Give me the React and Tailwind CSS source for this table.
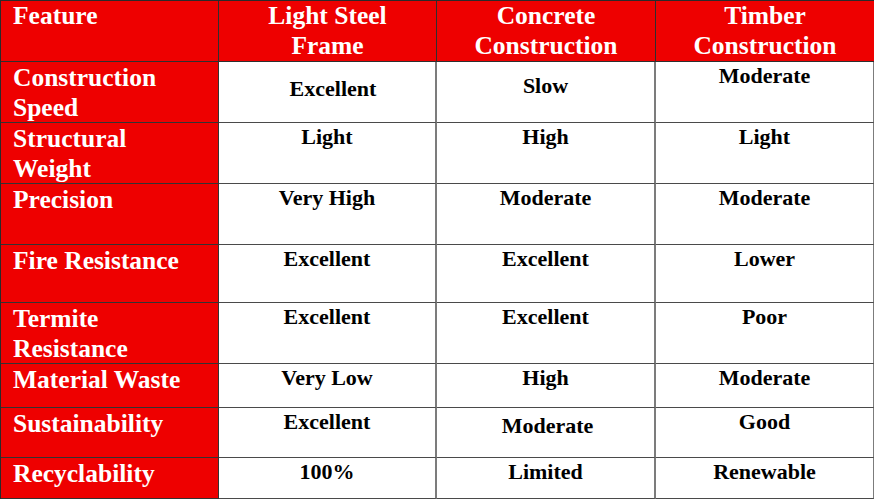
import React from "react";

const headers = [
  ["Light Steel", "Frame"],
  ["Concrete", "Construction"],
  ["Timber", "Construction"],
];

// label lines, row height, values as [text, paddingTop class, extra class]
const rows = [
  { label: ["Construction", "Speed"], h: "h-[61px]", cells: [["Excellent", "pt-[14px]", "pl-3"], ["Slow", "pt-[11px]"], ["Moderate", "pt-[1px]"]] },
  { label: ["Structural", "Weight"], h: "h-[61px]", cells: [["Light"], ["High"], ["Light"]] },
  { label: ["Precision"], h: "h-[61px]", cells: [["Very High"], ["Moderate"], ["Moderate"]] },
  { label: ["Fire Resistance"], h: "h-[58px]", cells: [["Excellent"], ["Excellent"], ["Lower"]] },
  { label: ["Termite", "Resistance"], h: "h-[61px]", cells: [["Excellent"], ["Excellent"], ["Poor"]] },
  { label: ["Material Waste"], h: "h-[44px]", cells: [["Very Low"], ["High"], ["Moderate"]] },
  { label: ["Sustainability"], h: "h-[50px]", cells: [["Excellent"], ["Moderate", "pt-[5px]", "pl-1"], ["Good"]] },
  { label: ["Recyclability"], h: "h-[41px]", cells: [["100%"], ["Limited"], ["Renewable"]] },
];

export default function App() {
  return (
    <div className="w-[874px] h-[500px] bg-white font-['Liberation_Serif','Times_New_Roman',serif] font-bold">
      <div className="grid grid-cols-[218px_218px_219px_219px] border-t border-l border-[#2a2a2a]">
        {/* header */}
        <div className="h-[61px] bg-[#ee0000] text-white text-[25.5px] leading-[29.5px] pl-3 border-r border-b border-[#2f2f2f]">
          Feature
        </div>
        {headers.map((h, i) => (
          <div
            key={i}
            className="h-[61px] bg-[#ee0000] text-white text-[25.5px] leading-[29.5px] text-center border-r border-b border-[#2f2f2f]"
          >
            {h[0]}
            <br />
            {h[1]}
          </div>
        ))}

        {rows.map((r, ri) => (
          <React.Fragment key={ri}>
            <div
              className={`${r.h} bg-[#ee0000] text-white text-[25.5px] leading-[29.5px] pl-3 pt-[1px] whitespace-nowrap border-r border-b border-[#333]`}
            >
              {r.label.map((l, li) => (
                <div key={li}>{l}</div>
              ))}
            </div>
            {r.cells.map((c, ci) => (
              <div
                key={ci}
                className={`${r.h} ${c[1] || "pt-[1px]"} ${c[2] || ""} text-center text-black text-[22px] leading-[26px] border-r-2 border-r-[#7c7c7c] border-b border-b-[#4a4a4a]`}
              >
                {c[0]}
              </div>
            ))}
          </React.Fragment>
        ))}
      </div>
    </div>
  );
}
